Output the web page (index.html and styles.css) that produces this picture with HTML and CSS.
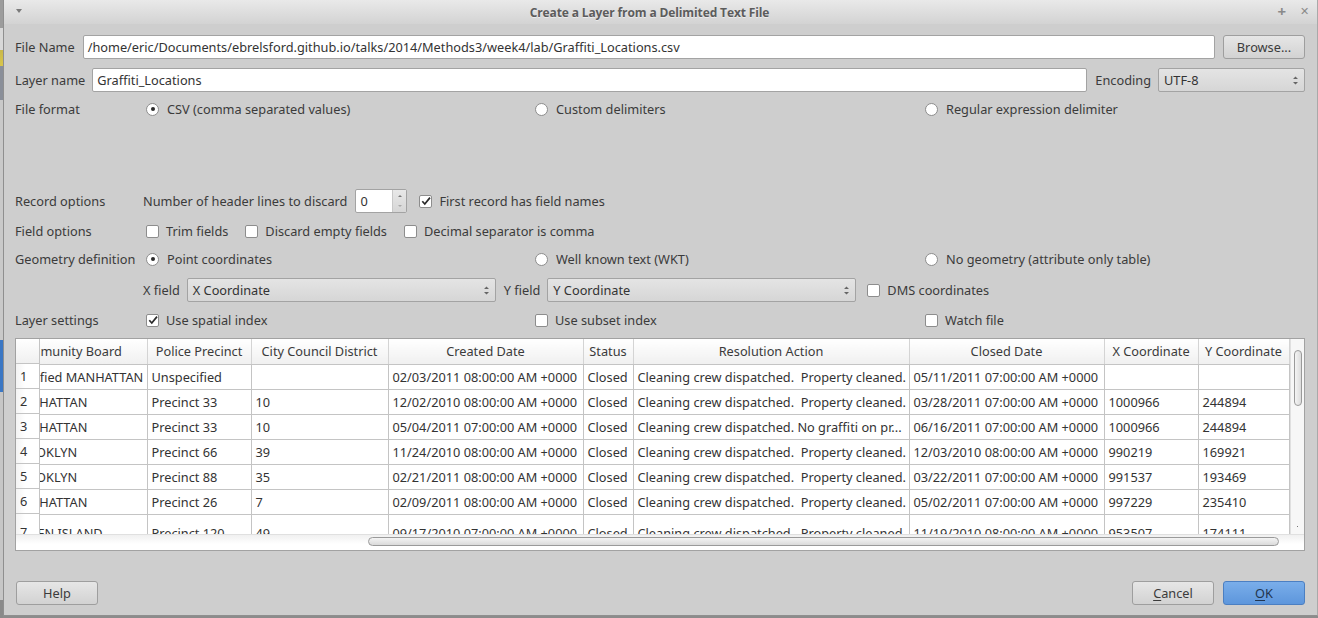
FILE: index.html
```html
<!DOCTYPE html>
<html>
<head>
<meta charset="utf-8">
<link rel="stylesheet" href="styles.css">
</head>
<body>
<div class="screen">
  <div class="behind"></div>
  <div class="dialog">
    <div class="titlebar">
      <span class="tb-menu"></span>
      <span class="tb-title">Create a Layer from a Delimited Text File</span>
      <span class="tb-btns"><span class="tb-plus">+</span><span class="tb-close">&#x2715;</span></span>
    </div>
    <div class="content">
      <div class="row r-file">
        <span class="lbl-n">File Name</span>
        <div class="input grow">/home/eric/Documents/ebrelsford.github.io/talks/2014/Methods3/week4/lab/Graffiti_Locations.csv</div>
        <div class="btn browse">Browse...</div>
      </div>
      <div class="row r-layer">
        <span class="lbl-n">Layer name</span>
        <div class="input grow">Graffiti_Locations</div>
        <span class="lbl-n enc-lbl">Encoding</span>
        <div class="combo enc">UTF-8<span class="arrows"><svg width="7" height="11" viewBox="0 0 7 11"><path d="M1 4 L3.5 1.5 L6 4Z M1 7 L3.5 9.5 L6 7Z" fill="#666"/></svg></span></div>
      </div>
      <div class="row r-format">
        <span class="lbl">File format</span>
        <div class="opts">
          <span class="opt"><span class="radio on"></span>CSV (comma separated values)</span>
          <span class="opt"><span class="radio"></span>Custom delimiters</span>
          <span class="opt"><span class="radio"></span>Regular expression delimiter</span>
        </div>
      </div>
      <div class="row r-record">
        <span class="lbl lbl-b">Record options</span>
        <span class="txt">Number of header lines to discard</span>
        <div class="spin"><span class="spin-val">0</span><span class="spin-btns"><svg width="6" height="20" viewBox="0 0 6 20"><path d="M1 6 L3 4 L5 6Z" fill="#777"/><path d="M1 14 L3 16 L5 14Z" fill="#aaa"/></svg></span></div>
        <span class="opt first-rec"><span class="check on"><svg width="12" height="12" viewBox="0 0 12 12"><path d="M2.3 6.2 L4.8 9 L10 2.6" fill="none" stroke="#2a2a2a" stroke-width="1.7"/></svg></span>First record has field names</span>
      </div>
      <div class="row r-field">
        <span class="lbl">Field options</span>
        <div class="flow">
          <span class="opt"><span class="check"></span>Trim fields</span>
          <span class="opt"><span class="check"></span>Discard empty fields</span>
          <span class="opt"><span class="check"></span>Decimal separator is comma</span>
        </div>
      </div>
      <div class="row r-geom">
        <span class="lbl">Geometry definition</span>
        <div class="opts">
          <span class="opt"><span class="radio on"></span>Point coordinates</span>
          <span class="opt"><span class="radio"></span>Well known text (WKT)</span>
          <span class="opt"><span class="radio"></span>No geometry (attribute only table)</span>
        </div>
      </div>
      <div class="row r-xy">
        <span class="lbl lbl-b"></span>
        <span class="txt">X field</span>
        <div class="combo xy">X Coordinate<span class="arrows"><svg width="7" height="11" viewBox="0 0 7 11"><path d="M1 4 L3.5 1.5 L6 4Z M1 7 L3.5 9.5 L6 7Z" fill="#666"/></svg></span></div>
        <span class="txt">Y field</span>
        <div class="combo xy">Y Coordinate<span class="arrows"><svg width="7" height="11" viewBox="0 0 7 11"><path d="M1 4 L3.5 1.5 L6 4Z M1 7 L3.5 9.5 L6 7Z" fill="#666"/></svg></span></div>
        <span class="opt dms"><span class="check"></span>DMS coordinates</span>
      </div>
      <div class="row r-settings">
        <span class="lbl">Layer settings</span>
        <div class="opts">
          <span class="opt"><span class="check on"><svg width="12" height="12" viewBox="0 0 12 12"><path d="M2.3 6.2 L4.8 9 L10 2.6" fill="none" stroke="#2a2a2a" stroke-width="1.7"/></svg></span>Use spatial index</span>
          <span class="opt"><span class="check"></span>Use subset index</span>
          <span class="opt"><span class="check"></span>Watch file</span>
        </div>
      </div>

      <div class="tableview">
        <div class="tv-main">
          <div class="rowhdr">
            <div class="rh corner"></div>
            <div class="rh">1</div>
            <div class="rh">2</div>
            <div class="rh">3</div>
            <div class="rh">4</div>
            <div class="rh">5</div>
            <div class="rh">6</div>
            <div class="rh tall">7</div>
          </div>
          <div class="viewport">
            <table class="data">
              <colgroup>
                <col class="c1"><col class="c2"><col class="c3"><col class="c4"><col class="c5"><col class="c6"><col class="c7"><col class="c8"><col class="c9">
              </colgroup>
              <thead>
                <tr><th>Community Board</th><th>Police Precinct</th><th>City Council District</th><th>Created Date</th><th>Status</th><th>Resolution Action</th><th>Closed Date</th><th>X Coordinate</th><th>Y Coordinate</th></tr>
              </thead>
              <tbody>
                <tr><td>Unspecified MANHATTAN</td><td>Unspecified</td><td></td><td>02/03/2011 08:00:00 AM +0000</td><td>Closed</td><td>Cleaning crew dispatched.  Property cleaned.</td><td>05/11/2011 07:00:00 AM +0000</td><td></td><td></td></tr>
                <tr><td>10 MANHATTAN</td><td>Precinct 33</td><td>10</td><td>12/02/2010 08:00:00 AM +0000</td><td>Closed</td><td>Cleaning crew dispatched.  Property cleaned.</td><td>03/28/2011 07:00:00 AM +0000</td><td>1000966</td><td>244894</td></tr>
                <tr><td>10 MANHATTAN</td><td>Precinct 33</td><td>10</td><td>05/04/2011 07:00:00 AM +0000</td><td>Closed</td><td>Cleaning crew dispatched. No graffiti on pr...</td><td>06/16/2011 07:00:00 AM +0000</td><td>1000966</td><td>244894</td></tr>
                <tr><td>03 BROOKLYN</td><td>Precinct 66</td><td>39</td><td>11/24/2010 08:00:00 AM +0000</td><td>Closed</td><td>Cleaning crew dispatched.  Property cleaned.</td><td>12/03/2010 08:00:00 AM +0000</td><td>990219</td><td>169921</td></tr>
                <tr><td>05 BROOKLYN</td><td>Precinct 88</td><td>35</td><td>02/21/2011 08:00:00 AM +0000</td><td>Closed</td><td>Cleaning crew dispatched.  Property cleaned.</td><td>03/22/2011 07:00:00 AM +0000</td><td>991537</td><td>193469</td></tr>
                <tr><td>10 MANHATTAN</td><td>Precinct 26</td><td>7</td><td>02/09/2011 08:00:00 AM +0000</td><td>Closed</td><td>Cleaning crew dispatched.  Property cleaned.</td><td>05/02/2011 07:00:00 AM +0000</td><td>997229</td><td>235410</td></tr>
                <tr class="tall"><td>01 STATEN ISLAND</td><td>Precinct 120</td><td>49</td><td>09/17/2010 07:00:00 AM +0000</td><td>Closed</td><td>Cleaning crew dispatched.  Property cleaned.</td><td>11/19/2010 08:00:00 AM +0000</td><td>953507</td><td>174111</td></tr>
              </tbody>
            </table>
          </div>
          <div class="vscroll"><div class="vhandle"></div><div class="vdots"></div></div>
        </div>
        <div class="hscroll">
          <div class="htrack"><div class="hhandle"></div></div>
        </div>
      </div>

      <div class="buttons">
        <div class="btn help">Help</div>
        <div class="spacer"></div>
        <div class="btn cancel"><u>C</u>ancel</div>
        <div class="btn ok"><u>O</u>K</div>
      </div>
    </div>
  </div>
</div>
</body>
</html>
```
FILE: styles.css
```css
* { box-sizing: border-box; }
html, body { margin: 0; padding: 0; }
body {
  width: 1318px;
  height: 618px;
  overflow: hidden;
  font-family: "Noto Sans", "Open Sans", sans-serif;
  font-size: 12.75px;
  color: #3b3b3b;
  background: #8c8c8c;
}
.screen {
  display: flex;
  width: 1318px;
  height: 618px;
}
.behind {
  width: 3px;
  flex: none;
  background: linear-gradient(to bottom,
    #9c9c9c 0, #9c9c9c 28px, #d8d8d8 28px, #d8d8d8 50px, #c9b84a 50px, #d9c64b 66px,
    #8a8f99 66px, #8a8f99 100px, #c9c9c9 100px, #c9c9c9 340px, #3b77c4 340px, #3b77c4 392px,
    #c6c6c6 392px, #c6c6c6 600px, #8a8a8a 600px);
}
.dialog {
  flex: 1;
  display: flex;
  flex-direction: column;
  background: #cecece;
  border-left: 1px solid #8f8f8f;
  border-right: 1px solid #a9a9a9;
  border-bottom: 1px solid #8f8f8f;
  height: 616px;
}
.titlebar {
  height: 24px;
  flex: none;
  display: flex;
  align-items: center;
  justify-content: center;
  position: relative;
  background: linear-gradient(to bottom, #e9e9e9, #d3d3d3);
}
.tb-menu {
  position: absolute;
  left: 12px;
  top: 9px;
  width: 0; height: 0;
  border-left: 3.5px solid transparent;
  border-right: 3.5px solid transparent;
  border-top: 4px solid #7a7a7a;
}
.tb-title {
  font-family: "Open Sans", "Noto Sans", sans-serif;
  font-weight: bold;
  font-size: 12px;
  color: #5c5c5c;
  letter-spacing: -0.12px;
  margin-left: -22px;
  text-shadow: 0 1px 0 rgba(255,255,255,0.5);
}
.tb-btns {
  position: absolute;
  right: 8px;
  top: 3px;
  display: flex;
  gap: 14px;
  color: #8a8a8a;
}
.tb-plus { font-size: 15px; font-weight: bold; line-height: 16px; }
.tb-close { font-size: 11px; line-height: 16px; }

.content {
  flex: 1;
  display: flex;
  flex-direction: column;
  padding: 11px 12px 0 11px;
}
.row {
  display: flex;
  align-items: center;
  flex: none;
}
.r-file { height: 24px; gap: 8px; }
.r-layer { height: 24px; gap: 7px; margin-top: 9px; }
.r-format { height: 20px; margin-top: 7px; }
.r-record { height: 24px; margin-top: 70px; }
.r-field { height: 20px; margin-top: 8px; }
.r-geom { height: 20px; margin-top: 8px; }
.r-xy { height: 24px; margin-top: 9px; }
.r-settings { height: 20px; margin-top: 8px; }

.lbl { width: 131px; flex: none; }
.lbl-b { width: 128px; }
.lbl-n { flex: none; }
.enc-lbl { margin-left: 1px; }
.grow { flex: 1; }

.input {
  height: 24px;
  background: #fff;
  border: 1px solid #a3a3a3;
  border-radius: 2px;
  padding: 0 4px;
  line-height: 22px;
  white-space: nowrap;
  overflow: hidden;
  color: #333;
}
.btn {
  height: 24px;
  width: 82px;
  flex: none;
  display: flex;
  align-items: center;
  justify-content: center;
  background: linear-gradient(to bottom, #e6e6e6, #d2d2d2);
  border: 1px solid #9e9e9e;
  border-radius: 3px;
  color: #3b3b3b;
}
.combo {
  height: 24px;
  flex: none;
  display: flex;
  align-items: center;
  justify-content: space-between;
  padding: 0 5px 0 5px;
  background: linear-gradient(to bottom, #e4e4e4, #d6d6d6);
  border: 1px solid #a3a3a3;
  border-radius: 2px;
  color: #333;
}
.arrows { display: flex; align-items: center; }
.enc { width: 147px; }
.xy { width: 309px; }

.opts {
  display: grid;
  grid-template-columns: 389px 390px 1fr;
  flex: 1;
}
.opt {
  display: inline-flex;
  align-items: center;
  white-space: nowrap;
}
.radio {
  width: 13px; height: 13px;
  border-radius: 50%;
  background: #fff;
  border: 1px solid #8d8d8d;
  margin-right: 8px;
  flex: none;
  display: flex;
  align-items: center;
  justify-content: center;
}
.radio.on::after {
  content: "";
  width: 4px; height: 4px;
  border-radius: 50%;
  background: #2a2a2a;
}
.check {
  width: 13px; height: 13px;
  background: #fff;
  border: 1px solid #8d8d8d;
  border-radius: 2px;
  margin-right: 7px;
  flex: none;
  display: flex;
  align-items: center;
  justify-content: center;
}
.check svg { flex: none; }

.txt { flex: none; white-space: nowrap; }
.spin {
  width: 52px;
  height: 24px;
  margin-left: 8px;
  display: flex;
  background: #fff;
  border: 1px solid #a3a3a3;
  border-radius: 2px;
}
.spin-val { flex: 1; padding-left: 4px; line-height: 22px; color: #333; }
.spin-btns {
  width: 14px;
  display: flex;
  align-items: center;
  justify-content: center;
  border-left: 1px solid #c8c8c8;
  background: linear-gradient(to bottom, #e8e8e8, #d6d6d6);
}
.first-rec { margin-left: 12px; }
.flow { display: flex; gap: 17px; }

.r-xy .txt { margin-right: 7px; }
.r-xy .combo { margin-right: 8px; }
.dms { margin-left: 3px; }

/* table */
.tableview {
  margin-top: 8px;
  height: 213px;
  flex: none;
  border: 1px solid #a2a2a2;
  background: #fff;
  display: flex;
  flex-direction: column;
}
.tv-main {
  height: 195px;
  display: flex;
  overflow: hidden;
}
.rowhdr {
  width: 24px;
  flex: none;
  border-right: 1px solid #c4c4c4;
  overflow: hidden;
}
.rh {
  height: 25px;
  border-bottom: 1px solid #c4c4c4;
  padding-left: 4px;
  line-height: 24px;
  color: #333;
  background: linear-gradient(to right, #f3f3f3, #ffffff 40%);
}
.rh.corner { background: linear-gradient(to bottom, #ffffff, #f0f0f0); }
.rh.tall { height: 37px; line-height: 37px; border-bottom: none; }
.viewport {
  width: 1250px;
  flex: none;
  overflow: hidden;
}
.data {
  table-layout: fixed;
  border-collapse: collapse;
  width: 1301px;
  margin-left: -52px;
  color: #333;
  font-size: 12.75px;
}
.c1 { width: 159px; }
.c2 { width: 104px; }
.c3 { width: 137px; }
.c4 { width: 195px; }
.c5 { width: 50px; }
.c6 { width: 276px; }
.c7 { width: 195px; }
.c8 { width: 94px; }
.c9 { width: 91px; }
.data th {
  height: 25px;
  font-weight: normal;
  text-align: center;
  border-right: 1px solid #d4d4d4;
  border-bottom: 1px solid #c4c4c4;
  background: linear-gradient(to bottom, #ffffff, #f0f0f0);
  white-space: nowrap;
  overflow: hidden;
  padding: 0;
  color: #3b3b3b;
}
.data td {
  height: 25px;
  padding: 0 4px;
  border-right: 1px solid #c4c4c4;
  border-bottom: 1px solid #c4c4c4;
  white-space: pre;
  overflow: hidden;
}
.data tr.tall td { height: 37px; border-bottom: none; }
.vscroll {
  width: 14px;
  flex: none;
  position: relative;
  border-left: 1px solid #e0e0e0;
  background: #f7f7f7;
}
.vhandle {
  position: absolute;
  left: 3px;
  top: 11px;
  width: 8px;
  height: 56px;
  border: 1px solid #9a9a9a;
  border-radius: 4px;
  background: linear-gradient(to right, #f4f4f4, #dcdcdc);
}
.vdots {
  position: absolute;
  left: 6px;
  top: 187px;
  width: 1px; height: 1px;
  background: #777;
}
.hscroll {
  height: 16px;
  flex: none;
  display: flex;
  border-top: 1px solid #e0e0e0;
  background: linear-gradient(to bottom, #f0f0f0, #ffffff 60%);
  padding-right: 14px;
}
.htrack {
  flex: 1;
  position: relative;
}
.hhandle {
  position: absolute;
  left: 352px;
  top: 2px;
  width: 911px;
  height: 9px;
  border: 1px solid #9a9a9a;
  border-radius: 5px;
  background: linear-gradient(to bottom, #f4f4f4, #dadada);
}

.buttons {
  margin-top: 30px;
  height: 24px;
  display: flex;
  gap: 9px;
  flex: none;
  padding-left: 1px;
}
.spacer { flex: 1; }
.btn u { text-decoration: underline; text-underline-offset: 2px; }
.ok {
  background: linear-gradient(to bottom, #7aaeea, #5d96dc);
  border-color: #4b7fc2;
  color: #22354f;
}
```
